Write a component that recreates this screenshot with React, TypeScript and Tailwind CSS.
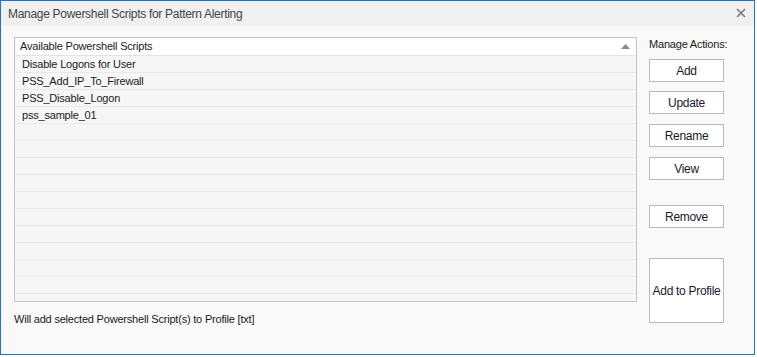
import React from "react";

const rows = ["Disable Logons for User", "PSS_Add_IP_To_Firewall", "PSS_Disable_Logon", "pss_sample_01"];
const totalRows = 15;

function Btn({ label, className }: { label: string; className: string }) {
  return (
    <button
      className={`w-[75px] bg-white border border-[#b9b9b9] text-[12px] tracking-[-0.3px] text-[#1a1a2a] flex items-center justify-center whitespace-nowrap ${className}`}
    >
      {label}
    </button>
  );
}

export default function App() {
  return (
    <div className="w-[757px] h-[357px] bg-white" style={{ fontFamily: '"Liberation Sans", Arial, sans-serif' }}>
      <div className="w-[755px] h-[355px] border border-[#1d72cc] bg-[#f9f9f9] flex flex-col">
        <div className="h-[25px] bg-[#f0f0f0] flex items-center justify-between pl-[7px] pr-[8px] shrink-0">
          <span className="text-[12px] text-[#444444] tracking-[-0.3px]">
            Manage Powershell Scripts for Pattern Alerting
          </span>
          <svg width="10" height="10" viewBox="0 0 10 10" className="mt-[-1px]">
            <path d="M1 1 L9 9 M9 1 L1 9" stroke="#7a7a7a" strokeWidth="1.6" />
          </svg>
        </div>
        <div className="flex flex-1 pl-[13px] pt-[11px]">
          <div className="flex flex-col">
            <div className="w-[623px] h-[265px] border border-[#c3c3c3] bg-[#f6f6f6] flex flex-col overflow-hidden">
              <div className="h-[18px] shrink-0 bg-white border-b border-[#e3e3e3] ml-[1px] flex items-center justify-between pl-[4px] pr-[6px]">
                <span className="text-[11px] text-[#222] tracking-[-0.2px]">Available Powershell Scripts</span>
                <svg width="9" height="5" viewBox="0 0 9 5">
                  <path d="M0 5 L4.5 0 L9 5 Z" fill="#8a8a8a" />
                </svg>
              </div>
              {Array.from({ length: totalRows }).map((_, i) => (
                <div
                  key={i}
                  className="h-[17px] shrink-0 border-b border-[#e9e9e9] flex items-center pl-[7px] pt-[1px] text-[11px] tracking-[-0.2px] text-[#1a1a1a]"
                >
                  {rows[i] ?? ""}
                </div>
              ))}
            </div>
            <div className="mt-[9px] text-[11px] tracking-[-0.2px] text-[#1a1a1a]">
              Will add selected Powershell Script(s) to Profile [txt]
            </div>
          </div>
          <div className="flex flex-col ml-[12px] pt-0">
            <div className="text-[11px] tracking-[-0.2px] text-[#1a1a1a] h-[14px] leading-[14px]">Manage Actions:</div>
            <Btn label="Add" className="h-[23px] mt-[8px]" />
            <Btn label="Update" className="h-[23px] mt-[9px]" />
            <Btn label="Rename" className="h-[23px] mt-[10px]" />
            <Btn label="View" className="h-[23px] mt-[10px]" />
            <Btn label="Remove" className="h-[23px] mt-[25px]" />
            <Btn label="Add to Profile" className="h-[65px] mt-[30px]" />
          </div>
        </div>
      </div>
    </div>
  );
}
